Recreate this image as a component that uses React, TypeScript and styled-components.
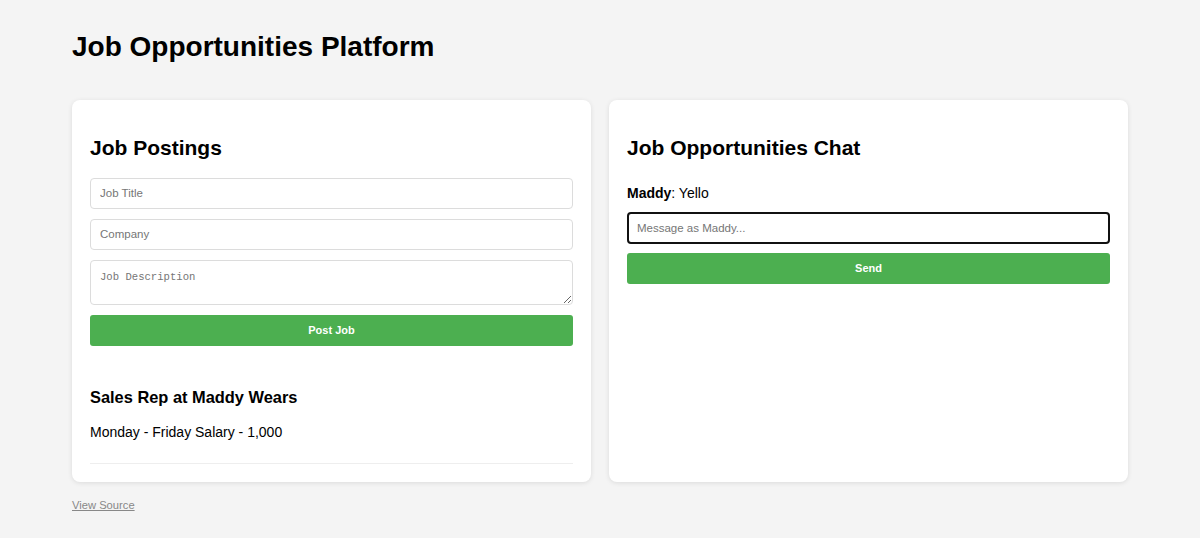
import React from "react";
import styled, { createGlobalStyle } from "styled-components";

const GlobalStyle = createGlobalStyle`
  html, body {
    margin: 0;
    padding: 0;
    background: #f4f4f4;
    font-family: "Liberation Sans", Arial, sans-serif;
    font-size: 14px;
    color: #000;
  }
  * { box-sizing: border-box; }
`;

const Page = styled.div`
  width: 1056px;
  margin: 0 auto;
  padding-top: 31px;
`;

const Title = styled.h1`
  margin: 0 0 37px;
  font-size: 28px;
  line-height: 32px;
  font-weight: bold;
`;

const Columns = styled.div`
  display: grid;
  grid-template-columns: 519px 519px;
  gap: 18px;
  height: 380px;
`;

const Card = styled.section`
  background: #fff;
  border-radius: 8px;
  box-shadow: 0 1px 5px rgba(0, 0, 0, 0.1);
  padding: 18px;
  display: flex;
  flex-direction: column;
`;

const CardTitle = styled.h2`
  margin: 18.4px 0 17.4px;
  font-size: 21px;
  font-weight: bold;
  line-height: 24px;
`;

const Form = styled.div`
  display: flex;
  flex-direction: column;
  gap: 10px;
`;

const Field = styled.input<{ $focused?: boolean }>`
  width: 100%;
  height: ${(p) => (p.$focused ? 32 : 31)}px;
  padding: 0 ${(p) => (p.$focused ? 8 : 9)}px;
  border: ${(p) => (p.$focused ? "2px solid #111" : "1px solid #dcdcdc")};
  border-radius: 4px;
  font-family: "Liberation Sans", Arial, sans-serif;
  font-size: 11.5px;
  color: #000;
  background: #fff;
  outline: none;
  &::placeholder { color: #767676; }
`;

const Area = styled.textarea`
  width: 100%;
  height: 45px;
  padding: 10px 9px 6px;
  border: 1px solid #dcdcdc;
  border-radius: 4px;
  font-family: "Liberation Mono", "DejaVu Sans Mono", monospace;
  font-size: 10.6px;
  resize: vertical;
  display: block;
  &::placeholder { color: #767676; }
`;

const GreenButton = styled.button`
  width: 100%;
  height: 31px;
  border: none;
  border-radius: 3px;
  background: #4caf50;
  color: #fff;
  font-family: "Liberation Sans", Arial, sans-serif;
  font-size: 11px;
  font-weight: bold;
  cursor: pointer;
`;

const JobList = styled.div`
  margin-top: 16px;
`;

const JobItem = styled.div`
  padding: 10px 0 9px;
  border-bottom: 1px solid #eee;
`;

const JobTitle = styled.h3`
  margin: 16.4px 0;
  font-size: 16.4px;
  line-height: 19px;
  font-weight: bold;
`;

const JobText = styled.p`
  margin: 0 0 14px;
  font-size: 14px;
  line-height: 16px;
`;

const Messages = styled.div`
  padding: 7px 0 11px;
`;

const Message = styled.div`
  font-size: 14px;
  line-height: 16px;
`;

const ChatForm = styled.div`
  display: flex;
  flex-direction: column;
  gap: 9px;
`;

const Footer = styled.div`
  margin-top: 16px;
`;

const SourceLink = styled.a`
  font-size: 11.2px;
  color: #888;
  text-decoration: underline;
`;

export default function App() {
  return (
    <>
      <GlobalStyle />
      <Page>
        <Title>Job Opportunities Platform</Title>
        <Columns>
          <Card>
            <CardTitle>Job Postings</CardTitle>
            <Form>
              <Field placeholder="Job Title" />
              <Field placeholder="Company" />
              <Area placeholder="Job Description" />
              <GreenButton>Post Job</GreenButton>
            </Form>
            <JobList>
              <JobItem>
                <JobTitle>Sales Rep at Maddy Wears</JobTitle>
                <JobText>Monday - Friday Salary - 1,000</JobText>
              </JobItem>
            </JobList>
          </Card>
          <Card>
            <CardTitle>Job Opportunities Chat</CardTitle>
            <Messages>
              <Message>
                <strong>Maddy</strong>: Yello
              </Message>
            </Messages>
            <ChatForm>
              <Field $focused placeholder="Message as Maddy..." />
              <GreenButton>Send</GreenButton>
            </ChatForm>
          </Card>
        </Columns>
        <Footer>
          <SourceLink href="#">View Source</SourceLink>
        </Footer>
      </Page>
    </>
  );
}
